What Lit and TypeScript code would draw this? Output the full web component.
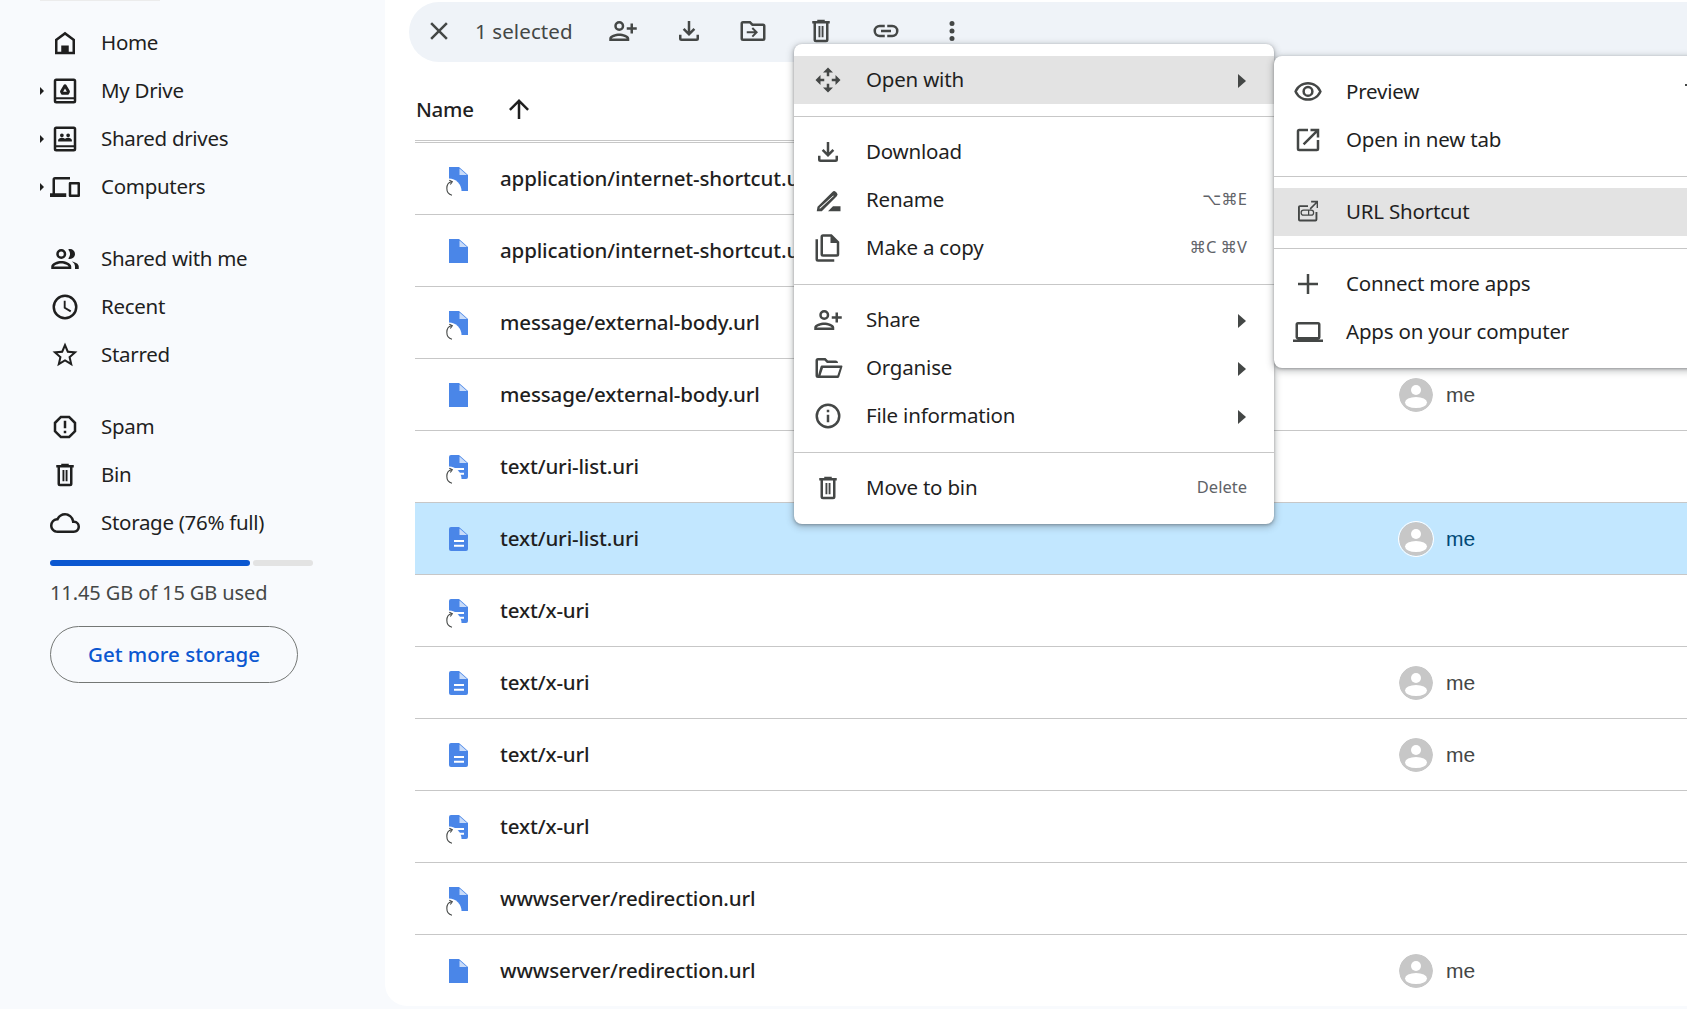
import { LitElement, html, css, svg } from "lit";
import { customElement } from "lit/decorators.js";

const P = (d: string) => svg`<path fill-rule="evenodd" d=${d}/>`;
const ic = (d: string, size = 30, vb = 24) =>
  html`<svg class="ic" width=${size} height=${size} viewBox="0 0 ${vb} ${vb}" fill="currentColor">${P(d)}</svg>`;
const ICONS: Record<string, string> = {
  home: "M12 3 4 9v12h16V9l-8-6zM6 19h3v-5h6v5h3v-9l-6-4.500-6 4.500v9z",
  drive: "M19 2H5a2 2 0 0 0-2 2v16a2 2 0 0 0 2 2h14a2 2 0 0 0 2-2V4a2 2 0 0 0-2-2zM5 4h14v13H5V4zm0 16v-1.500h14V20H5zM12 6.500c-.5 0-.9.3-1.100.7l-2.700 4.600c-.3.500-.2 1 .1 1.500l.6 1c.2.400.6.700 1.100.700h4c.5 0 .9-.3 1.100-.7l.6-1c.3-.5.3-1 .1-1.500l-2.700-4.600c-.2-.4-.6-.7-1.100-.7zm0 3.500 1.500 2.500h-3L12 10z",
  shared: "M19 2H5a2 2 0 0 0-2 2v16a2 2 0 0 0 2 2h14a2 2 0 0 0 2-2V4a2 2 0 0 0-2-2zM5 4h14v13H5V4zm0 16v-1.500h14V20H5zM9.500 10.500a1.500 1.500 0 1 0 0-3 1.500 1.500 0 0 0 0 3zm5 0a1.500 1.500 0 1 0 0-3 1.500 1.500 0 0 0 0 3zM6.500 14h11v-1c0-1-1.500-2-3-2-.8 0-1.700.3-2.500.8-.8-.5-1.700-.8-2.500-.8-1.500 0-3 1-3 2v1z",
  computers: "M4 6h12V4H4a2 2 0 0 0-2 2v11H0v3h13v-3H4V6zm19 2h-7a1 1 0 0 0-1 1v10a1 1 0 0 0 1 1h7a1 1 0 0 0 1-1V9a1 1 0 0 0-1-1zm-1 10h-5v-8h5v8z",
  people: "M9 12a4 4 0 1 0 0-8 4 4 0 0 0 0 8zm0-6a2 2 0 1 1 0 4 2 2 0 0 1 0-4zm0 7.500c-3 0-8 1.500-8 4.500v2h16v-2c0-3-5-4.500-8-4.500zM3 18c.3-1 3.500-2.500 6-2.500s5.700 1.500 6 2.500H3zm13-6a4 4 0 0 0 0-8c-.5 0-1 .1-1.400.3a6 6 0 0 1 0 7.400c.4.200.900.300 1.400.300zm1.500 2c1.500.9 2.500 2.200 2.500 4v2h3v-2c0-2.200-2.800-3.500-5.500-4z",
  clock: "M12 2a10 10 0 1 0 0 20 10 10 0 0 0 0-20zm0 18a8 8 0 1 1 0-16 8 8 0 0 1 0 16zm.5-13H11v6l5.200 3.100.8-1.300-4.500-2.700V7z",
  star: "m22 9.240-7.190-.62L12 2 9.190 8.630 2 9.240l5.460 4.730L5.820 21 12 17.270 18.180 21l-1.630-7.030L22 9.240zM12 15.400l-3.760 2.270 1-4.280-3.320-2.880 4.380-.38L12 6.100l1.710 4.040 4.380.38-3.320 2.880 1 4.280L12 15.400z",
  spam: "M15.730 3H8.270L3 8.270v7.460L8.270 21h7.460L21 15.730V8.270L15.730 3zM19 14.900 14.900 19H9.100L5 14.900V9.100L9.100 5h5.800L19 9.100v5.800zM11 7h2v6h-2zm0 8h2v2h-2z",
  bin: "M15 4V3H9v1H5v2h1v13a2 2 0 0 0 2 2h8a2 2 0 0 0 2-2V6h1V4h-4zm1 15H8V6h8v13zM10 8h1.500v9H10zm2.500 0H14v9h-1.500z",
  cloud: "M12 6c2.620 0 4.880 1.860 5.390 4.430l.3 1.500 1.530.11A2.980 2.980 0 0 1 22 15c0 1.650-1.350 3-3 3H6c-2.210 0-4-1.790-4-4 0-2.050 1.530-3.760 3.560-3.970l1.070-.11.5-.95A5.469 5.469 0 0 1 12 6m0-2C9.110 4 6.600 5.640 5.350 8.040A5.994 5.994 0 0 0 0 14c0 3.310 2.690 6 6 6h13c2.760 0 5-2.240 5-5 0-2.640-2.050-4.780-4.650-4.960A7.490 7.490 0 0 0 12 4z",
  close: "M19 6.410 17.590 5 12 10.590 6.410 5 5 6.410 10.590 12 5 17.590 6.410 19 12 13.410 17.590 19 19 17.590 13.410 12z",
  addperson: "M9 12a4 4 0 1 0 0-8 4 4 0 0 0 0 8zm0-6a2 2 0 1 1 0 4 2 2 0 0 1 0-4zm0 8c-2.700 0-8 1.300-8 4v2h16v-2c0-2.700-5.300-4-8-4zm-6 4c.2-.7 3.300-2 6-2s5.800 1.300 6 2H3zM20 9V6h-2v3h-3v2h3v3h2v-3h3V9h-3z",
  download: "M18 15v3H6v-3H4v3a2 2 0 0 0 2 2h12a2 2 0 0 0 2-2v-3h-2zm-1-4-1.410-1.410L13 12.170V4h-2v8.170L8.410 9.590 7 11l5 5 5-5z",
  move: "M20 6h-8l-2-2H4a2 2 0 0 0-2 2v12a2 2 0 0 0 2 2h16a2 2 0 0 0 2-2V8a2 2 0 0 0-2-2zm0 12H4V6h5.170l2 2H20v10zm-8-1 4-4-4-4-1.100 1.100 2.100 2.100H7v1.600h6l-2.100 2.100L12 17z",
  link: "M17 7h-4v2h4a3 3 0 1 1 0 6h-4v2h4a5 5 0 0 0 0-10zm-6 8H7a3 3 0 1 1 0-6h4V7H7a5 5 0 0 0 0 10h4v-2zm-3-4h8v2H8z",
  dots: "M12 8a2 2 0 1 0 0-4 2 2 0 0 0 0 4zm0 2a2 2 0 1 0 0 4 2 2 0 0 0 0-4zm0 6a2 2 0 1 0 0 4 2 2 0 0 0 0-4z",
  up: "M4 12l1.410 1.410L11 7.830V20h2V7.830l5.580 5.590L20 12l-8-8-8 8z",
  openwith: "M12 2 8 6h3v3h2V6h3l-4-4zm0 20 4-4h-3v-3h-2v3H8l4 4zM2 12l4 4v-3h3v-2H6V8l-4 4zm20 0-4-4v3h-3v2h3v3l4-4z",
  rename: "M3 21l.6-3.600L15.500 5.500a2 2 0 0 1 2.800 0l.7.7a2 2 0 0 1 0 2.800L7 21H3zm2.300-2.800-.1.600.6-.1L16.600 8.800l-.4-.4L5.300 18.200zM12 21l4-4h6v4H12z",
  copy: "M15 1H8a2 2 0 0 0-2 2v14a2 2 0 0 0 2 2h11a2 2 0 0 0 2-2V7l-6-6zM8 17V3h6v5h5v9H8zM4 5H2v16a2 2 0 0 0 2 2h13v-2H4V5z",
  folder: "M20 6h-8l-2-2H4a2 2 0 0 0-2 2v12a2 2 0 0 0 2 2h15.500c.7 0 1.300-.4 1.500-1l2.500-8c.2-.6-.2-1-1-1H20V8a2 2 0 0 0-2-2zM4 18V6h5.170l2 2H18v0h2v2H7.500c-.8 0-1.300.400-1.500 1l-2 7zm15.500 0H6l2-6h13.500l-2 6z",
  info: "M11 7h2v2h-2zm0 4h2v6h-2zm1-9a10 10 0 1 0 0 20 10 10 0 0 0 0-20zm0 18a8 8 0 1 1 0-16 8 8 0 0 1 0 16z",
  eye: "M12 6a9.770 9.770 0 0 1 8.820 5.500A9.770 9.770 0 0 1 12 17a9.770 9.770 0 0 1-8.820-5.500A9.770 9.770 0 0 1 12 6m0-2C7 4 2.730 7.110 1 11.500 2.730 15.890 7 19 12 19s9.270-3.110 11-7.500C21.270 7.110 17 4 12 4zm0 5a2.500 2.500 0 1 1 0 5 2.500 2.500 0 0 1 0-5m0-2a4.500 4.500 0 1 0 0 9 4.500 4.500 0 0 0 0-9z",
  newtab: "M19 19H5V5h7V3H5a2 2 0 0 0-2 2v14a2 2 0 0 0 2 2h14a2 2 0 0 0 2-2v-7h-2v7zM14 3v2h3.590l-9.830 9.830 1.410 1.410L19 6.410V10h2V3h-7z",
  urlapp: "M19 19.500H5.500a1.500 1.500 0 0 1-1.500-1.500V8a1.500 1.500 0 0 1 1.500-1.500H12V8H5.500v10H18v-6h1.500v6a1.500 1.500 0 0 1-1.500 1.500zM14.500 3v1.300h3.500l-4.700 4.700.9.900 4.700-4.700V8.700H20V3h-5.500zM12 10H8.500a2.500 2.500 0 0 0 0 5h6a2.500 2.500 0 0 0 0-5H12zm0 1v3H8.500a1.500 1.500 0 0 1 0-3H12zm1 0h1.500a1.500 1.500 0 0 1 0 3H13v-3z",
  plus: "M20 13h-7v7h-2v-7H4v-2h7V4h2v7h7v2z",
  laptop: "M20 18a2 2 0 0 0 2-2V6a2 2 0 0 0-2-2H4a2 2 0 0 0-2 2v10c0 1.100.9 2 2 2H0v2h24v-2h-4zM4 6h16v10H4V6z",
};
const I = (n: string, size = 30) => ic(ICONS[n], size);

const fileIcon = (lines: boolean, shortcut: boolean) => html`
  <svg class="fileic" width="30" height="30" viewBox="0 0 30 30">
    ${lines
      ? svg`<path fill="#4a86e8" d="M9 3h8l9 8v14a2 2 0 0 1-2 2H9a2 2 0 0 1-2-2V5a2 2 0 0 1 2-2z" />`
      : svg`<path fill="#4a86e8" d="M7 3h10l9 8v16H7z" />`}
    <path fill="#c9dcf9" d="M17.500 4.500l7.500 6.500h-7.500z" />
    ${lines ? svg`<path fill="#fff" d="M12 16h10v2h-10zm0 4.700h10v2h-10z" />` : ""}
    ${shortcut
      ? svg`<circle cx="7" cy="27" r="12.500" fill="#fff" />
      <path fill="none" stroke="#444746" stroke-width="1.100" d="M9.500 17.800C3.600 18.800 2.800 29.800 10 31.200" />
      <path fill="none" stroke="#444746" stroke-width="1.100" d="M7.300 16.200l3 1.600-2 2.700" />`
      : ""}
  </svg>`;

const ROWS: [string, boolean, boolean][] = [
  ["application/internet-shortcut.url", true, false],
  ["application/internet-shortcut.url", false, false],
  ["message/external-body.url", true, false],
  ["message/external-body.url", false, false],
  ["text/uri-list.uri", true, true],
  ["text/uri-list.uri", false, true],
  ["text/x-uri", true, true],
  ["text/x-uri", false, true],
  ["text/x-url", false, true],
  ["text/x-url", true, true],
  ["wwwserver/redirection.url", true, false],
  ["wwwserver/redirection.url", false, false],
];

@customElement("app-root")
export class AppRoot extends LitElement {
  static styles = css`
    :host { display: block; width: 1687px; height: 1009px; overflow: hidden; position: relative;
      font-family: "Noto Sans", Roboto, sans-serif; color: #1f1f1f; background: #f8fafd; }
    .page { display: flex; height: 1009px; }
    .ic { display: block; flex: none; }
    .side { width: 385px; flex: none; padding-top: 19px; box-sizing: border-box; }
    .nav { display: flex; align-items: center; height: 48px; font-size: 20.500px; letter-spacing: -0.3px; position: relative; }
    .nav .t { padding-bottom: 2px; }
    .caret { width: 36px; flex: none; display: flex; justify-content: flex-end; }
    .tri { width: 0; height: 0; border-left: 4.500px solid #1f1f1f; border-top: 4.500px solid transparent; border-bottom: 4.500px solid transparent; margin-right: -8px; }
    .navic { width: 64px; flex: none; display: flex; justify-content: center; color: #1f1f1f; margin-right: 1px; box-sizing: border-box; padding-right: 6px; }
    .gap { height: 24px; }
    .bar { margin: 13px 0 0 50px; width: 263px; height: 6px; display: flex; gap: 3px; }
    .bar i { display: block; height: 6px; border-radius: 3px; }
    .bar .a { width: 200px; background: #0b57d0; }
    .bar .b { flex: 1; background: #e3e3e3; }
    .used { margin: 13px 0 0 50px; font-size: 20px; color: #444746; line-height: 27px; letter-spacing: -0.1px; }
    .btn { margin: 20px 0 0 50px; width: 248px; height: 57px; box-sizing: border-box; border: 1px solid #747775; border-radius: 29px; padding-bottom: 2px;
      display: flex; align-items: center; justify-content: center; color: #0b57d0; font-size: 20.500px; font-weight: 500; letter-spacing: 0; }
    .main { flex: 1; background: #fff; height: 1006px; border-radius: 0 0 0 22px; padding: 2px 0 0 24px; box-sizing: border-box; overflow: hidden; }
    .tools { height: 60px; background: #eff3f8; border-radius: 30px 0 0 30px; color: #444746; position: relative; display: flex; align-items: center; }
    .tool { position: absolute; top: 14px; }
    .sel { margin-left: 66px; padding-bottom: 2px; font-size: 20.500px; letter-spacing: 0.1px; color: #444746; }
    .list { margin-left: 6px; }
    .head { display: flex; align-items: center; height: 79px; padding: 15px 0 0 1px; font-size: 20.500px; font-weight: 500; letter-spacing: -0.3px; border-bottom: 1px solid #c7c7c7; box-sizing: border-box; }
    .head .ic { margin-left: 30px; }
    .headline { height: 1px; background: #c7c7c7; margin-top: 1px; }
    .row { display: flex; align-items: center; height: 72px; box-sizing: border-box; border-bottom: 1px solid #c7c7c7; font-size: 20.500px; letter-spacing: -0.14px; font-weight: 500; position: relative; }
    .row .name { padding-bottom: 2px; }
    .row.on { background: #c2e7ff; }
    .fileic { margin-left: 27px; margin-right: 28px; flex: none; overflow: visible; }
    .own { position: absolute; left: 984px; top: 19px; display: flex; align-items: center; gap: 13px; font-weight: 400; color: #444746; font-size: 21px; font-family: "Liberation Sans", sans-serif; letter-spacing: 0; }
    .row.on .own { color: #004a77; }
    .av { width: 34px; height: 34px; border-radius: 50%; display: block; }
    .row.on .av { outline: 1px solid #fff; }
    .menu { position: absolute; background: #fff; border-radius: 8px; box-shadow: 0 2px 6px 2px rgba(60,64,67,.25), 0 1px 3px rgba(60,64,67,.4); padding: 12px 0; box-sizing: border-box; color: #1f1f1f; }
    .m1 { left: 794px; top: 44px; width: 480px; height: 480px; }
    .m2 { left: 1274px; top: 56px; width: 460px; height: 312px; border-radius: 8px 0 0 8px; z-index: 2; }
    .it { display: flex; align-items: center; height: 48px; font-size: 20.500px; letter-spacing: -0.2px; position: relative; color: #1f1f1f; }
    .it.on { background: #e3e3e3; }
    .mi { width: 72px; flex: none; display: flex; justify-content: center; padding-right: 4px; box-sizing: border-box; color: #444746; }
    .lab { flex: 1; padding-bottom: 2px; }
    .sc { font-size: 16.500px; color: #5f6368; margin-right: 27px; padding-bottom: 4px; letter-spacing: 0; font-family: "Noto Sans", "DejaVu Sans", sans-serif; }
    .ar { width: 0; height: 0; border-left: 8px solid #444746; border-top: 7.500px solid transparent; border-bottom: 7.500px solid transparent; margin: 1px 28px 0 0; }
    hr { border: 0; background: #c7c7c7; margin: 12px 0 11px; height: 1px; }
    .tick { position: absolute; top: 84px; left: 1685px; width: 2px; height: 2px; background: #444746; z-index: 3; }
    .topshadow { position: absolute; left: 40px; top: 0; width: 120px; height: 1px; background: #ececec; }
  `;

  nav(name: string, label: string, caret = false) {
    return html`<div class="nav"><div class="caret">${caret ? html`<span class="tri"></span>` : ""}</div><div class="navic">${I(name)}</div><span class="t">${label}</span></div>`;
  }
  item(icon: string, label: string, opts: { on?: boolean; sc?: string; ar?: boolean } = {}) {
    return html`<div class="it ${opts.on ? "on" : ""}"><div class="mi">${I(icon)}</div><span class="lab">${label}</span>${opts.sc ? html`<span class="sc">${opts.sc}</span>` : ""}${opts.ar ? html`<span class="ar"></span>` : ""}</div>`;
  }
  avatar() {
    return html`<svg class="av" viewBox="0 0 34 34"><circle cx="17" cy="17" r="17" fill="#c7c7c7"/><circle cx="17" cy="12" r="5" fill="#fff"/><ellipse cx="17" cy="24.500" rx="11" ry="5.500" fill="#fff"/></svg>`;
  }
  render() {
    const owners = new Set([3, 5, 7, 8, 11]);
    const tool = (n: string, left: number) => html`<span class="tool" style="left:${left}px">${I(n)}</span>`;
    return html`
      <div class="topshadow"></div>
      <div class="page">
        <div class="side">
          ${this.nav("home", "Home")}
          ${this.nav("drive", "My Drive", true)}
          ${this.nav("shared", "Shared drives", true)}
          ${this.nav("computers", "Computers", true)}
          <div class="gap"></div>
          ${this.nav("people", "Shared with me")}
          ${this.nav("clock", "Recent")}
          ${this.nav("star", "Starred")}
          <div class="gap"></div>
          ${this.nav("spam", "Spam")}
          ${this.nav("bin", "Bin")}
          ${this.nav("cloud", "Storage (76% full)")}
          <div class="bar"><i class="a"></i><i class="b"></i></div>
          <div class="used">11.45 GB of 15 GB used</div>
          <div class="btn">Get more storage</div>
        </div>
        <div class="main">
          <div class="tools">
            ${tool("close", 15)}
            <span class="sel">1 selected</span>
            ${tool("addperson", 199)}
            ${tool("download", 265)}
            ${tool("move", 329)}
            ${tool("bin", 397)}
            ${tool("link", 462)}
            ${tool("dots", 528)}
          </div>
          <div class="list">
            <div class="head"><span>Name</span><span>${I("up")}</span></div>
            <div class="headline"></div>
            ${ROWS.map((r, i) => html`<div class="row ${i === 5 ? "on" : ""}">
              ${fileIcon(r[2], r[1])}<span class="name">${r[0]}</span>
              ${owners.has(i) ? html`<div class="own">${this.avatar()}<span>me</span></div>` : ""}
            </div>`)}
          </div>
        </div>
      </div>
      <div class="menu m1">
        ${this.item("openwith", "Open with", { on: true, ar: true })}
        <hr />
        ${this.item("download", "Download")}
        ${this.item("rename", "Rename", { sc: "⌥⌘E" })}
        ${this.item("copy", "Make a copy", { sc: "⌘C ⌘V" })}
        <hr />
        ${this.item("addperson", "Share", { ar: true })}
        ${this.item("folder", "Organise", { ar: true })}
        ${this.item("info", "File information", { ar: true })}
        <hr />
        ${this.item("bin", "Move to bin", { sc: "Delete" })}
      </div>
      <div class="menu m2">
        ${this.item("eye", "Preview")}
        ${this.item("newtab", "Open in new tab")}
        <hr />
        ${this.item("urlapp", "URL Shortcut", { on: true })}
        <hr />
        ${this.item("plus", "Connect more apps")}
        ${this.item("laptop", "Apps on your computer")}
      </div>
      <div class="tick"></div>
    `;
  }
}
